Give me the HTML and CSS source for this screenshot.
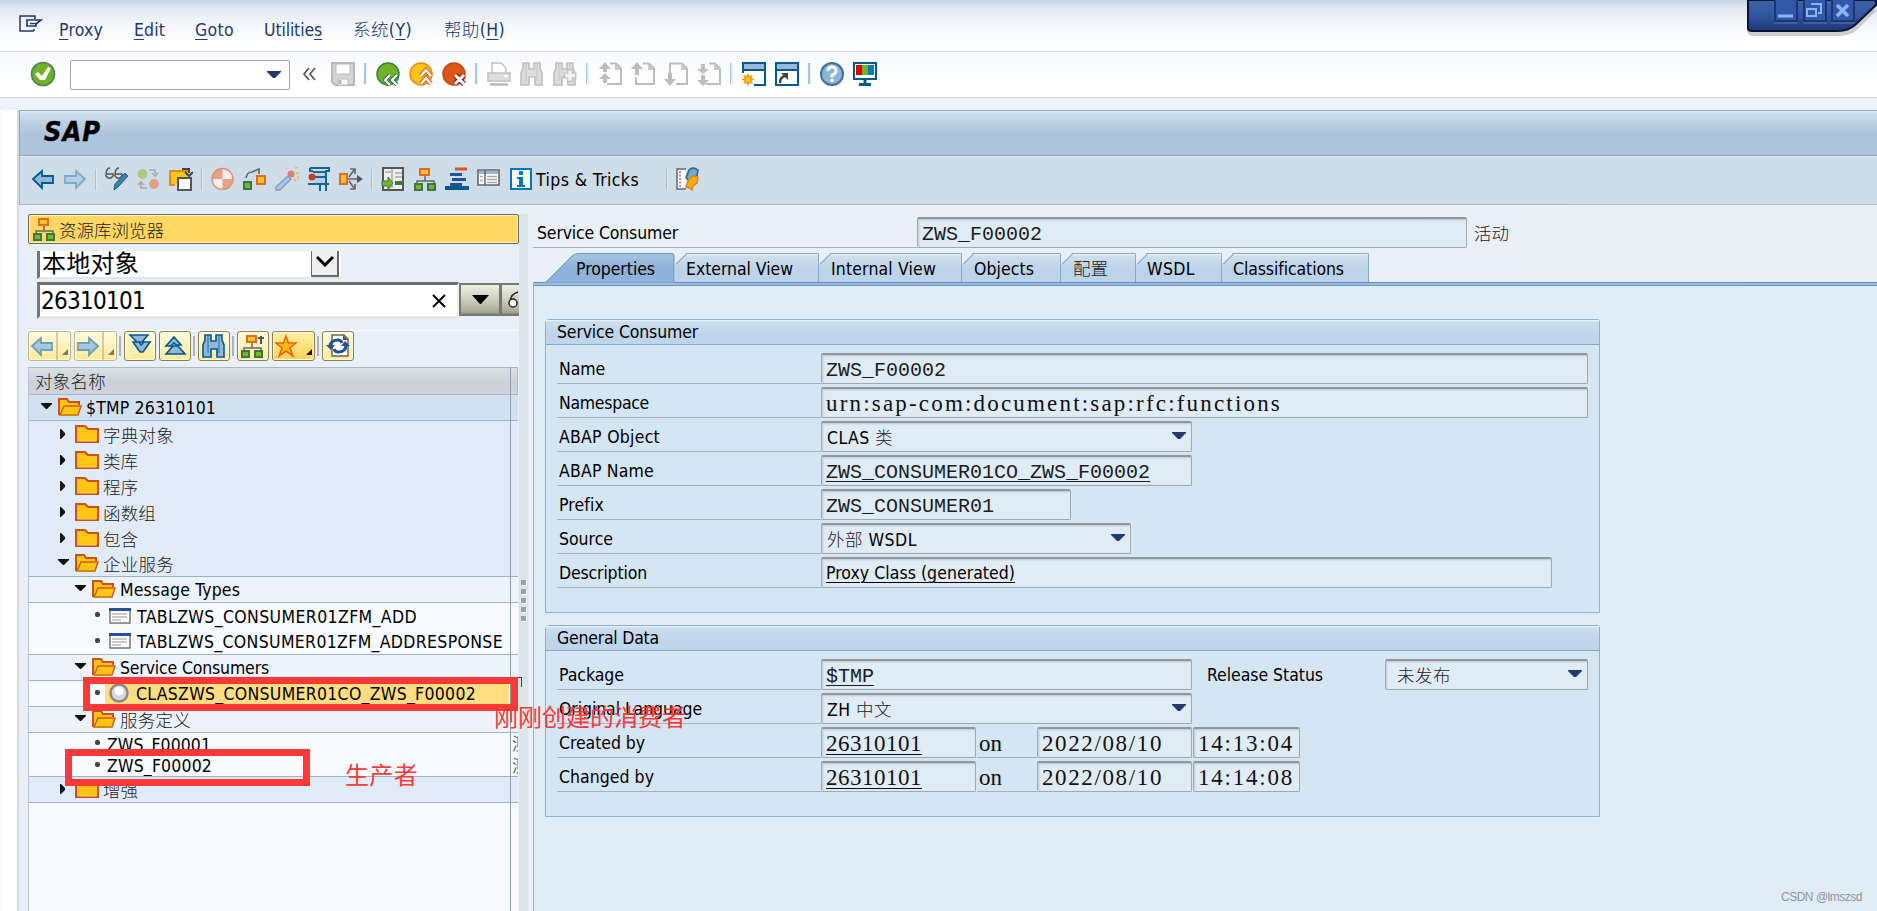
FILE: index.html
```html
<!DOCTYPE html>
<html lang="zh-CN">
<head>
<meta charset="utf-8">
<title>SAP</title>
<link rel="stylesheet" href="styles.css">
</head>
<body>
<svg class="defs" aria-hidden="true">
  <defs>
    <symbol id="folder" viewBox="0 0 24 18"><path d="M1 17V1h9l3 3h10v13z" fill="#ffc414" stroke="#cc4f1d" stroke-width="2"/><path d="M2.500 16h19" stroke="#ffd65c" stroke-width="1"/></symbol>
    <symbol id="open" viewBox="0 0 24 18"><path d="M1 17V1h8l2 3h10v3" fill="#ffc414" stroke="#cc4f1d" stroke-width="2"/><path d="M2 17 6 8h17l-3 9z" fill="#ffc414" stroke="#cf5d18" stroke-width="1.500"/><path d="M2 17h18" stroke="#cf8a12" stroke-width="1.500"/></symbol>
    <symbol id="dn" viewBox="0 0 11 8"><path d="M0 0h11v1L6 6H5L0 1z" fill="#111"/></symbol>
    <symbol id="rt" viewBox="0 0 6 12"><path d="M0 1h1l4 4v2l-4 4H0z" fill="#111"/></symbol>
    <symbol id="tree" viewBox="0 0 24 24"><path d="M12 9v5M4 18v-4h17v4" fill="none" stroke="#666" stroke-width="1.500"/><path d="M7 2h9v6H7z" fill="#ffc42d" stroke="#e26a22" stroke-width="2"/><path d="M2 17h7v6H2zM15 17h7v6h-7z" fill="#7db821" stroke="#39764a" stroke-width="2"/></symbol>
    <symbol id="bino" viewBox="0 0 24 24"><path d="M3 1h6v6h5V1h6v5l2 5v12h-7v-8H9v8H1V11l2-5z" fill="var(--f)" stroke="var(--s)" stroke-width="1.600"/><path d="M6 2v17M17 2v17" stroke="var(--s)" stroke-width=".8"/></symbol>
    <symbol id="page" viewBox="0 0 24 24"><path d="M12 1.500h6l5 5v15.500H9" fill="none" stroke="#bdbdbd" stroke-width="2"/><path d="M17 1v7h6z" fill="#c9c9c9"/></symbol>
    <symbol id="tri" viewBox="0 0 14 9"><path d="M0 1h14v1L8 8H6L0 2z" fill="#22386e"/></symbol>
  </defs>
</svg>

<header class="menubar">
  <svg class="exit" width="24" height="18" viewBox="0 0 24 18"><path d="M15 16H1V1h15v3M15 16v-2" fill="none" stroke="#22386e" stroke-width="1.500"/><path d="M8 5h14l-5 4v2H8zM11 8.500h6" fill="#fff" stroke="#22386e" stroke-width="1.700"/></svg>
  <span class="menu m1" data-w="44"><u>P</u>roxy</span>
  <span class="menu m2" data-w="31"><u>E</u>dit</span>
  <span class="menu m3" data-w="39"><u>G</u>oto</span>
  <span class="menu m4" data-w="58">Utilitie<u>s</u></span>
  <span class="menu m5" data-w="59">系统(<u>Y</u>)</span>
  <span class="menu m6" data-w="61">帮助(<u>H</u>)</span>
</header>
<svg class="winctl" width="132" height="42" viewBox="0 0 132 42">
  <defs><linearGradient id="wb" x1="0" y1="0" x2="0" y2="1"><stop offset="0" stop-color="#3c63a8"/><stop offset=".5" stop-color="#3156a0"/><stop offset="1" stop-color="#1d3674"/></linearGradient></defs>
  <path d="M2 0v30q0 6 7 6h86q12-1 18-7l19-19" fill="#999" opacity=".45"/>
  <path d="M3 0v28q0 3 4 3h86q10 0 17-6L131 5V0z" fill="url(#wb)" stroke="#0b1431" stroke-width="2"/>
  <path d="M30-2h22v23H30zM59-2h22v23H59zM87-2h22v23H87z" fill="#3158a6" stroke="#1c3674" stroke-width="2"/>
  <path d="M29 23h24M58 23h24M86 23h24" stroke="#5377ba"/>
  <path d="M33 16h15" stroke="#8cb2f7" stroke-width="3"/>
  <path d="M66 4h10v9h-3M62 9h9v7h-9zM62 9h10" fill="none" stroke="#8cb2f7" stroke-width="2"/>
  <path d="m92 5 11 11M103 5 92 16" stroke="#8cb2f7" stroke-width="3.600"/>
</svg>

<div class="stdbar">
  <svg width="26" height="26" viewBox="0 0 26 26"><circle cx="13" cy="13" r="11.500" fill="#70b128" stroke="#4d8350" stroke-width="1.600"/><path d="m5 13 3-2 4 4 6-9 3 1-6 12h-5z" fill="#fff"/></svg>
  <div class="combo"><svg width="14" height="9"><use href="#tri"/></svg></div>
  <svg class="chev" width="14" height="14" viewBox="0 0 14 14"><path d="M7 1 2 7l5 6M13 1 8 7l5 6" fill="none" stroke="#555" stroke-width="1.700"/></svg>
  <div class="icons33">
    <svg viewBox="0 0 24 24"><path d="M1 1h22v22H4l-3-3z" fill="#d5d5d5" stroke="#b9b9b9" stroke-width="2"/><path d="M5 2h14v10H5zM7 17h10v6H7z" fill="#fff" stroke="#b9b9b9"/><path d="M9 18v4" stroke="#b9b9b9" stroke-width="3"/></svg>
    <i class="sep"></i>
    <svg viewBox="0 0 24 24"><circle cx="12" cy="12" r="11" fill="#70b128" stroke="#3f8143" stroke-width="1.500"/><path d="m14 13-5 5 5 5M21 13l-5 5 5 5" fill="none" stroke="#2d6e3a" stroke-width="4"/><path d="m14 13-5 5 5 5M21 13l-5 5 5 5" fill="none" stroke="#fff" stroke-width="2.200"/></svg>
    <svg viewBox="0 0 24 24"><circle cx="12" cy="12" r="11" fill="#ffc414" stroke="#ee8a1c" stroke-width="1.500"/><path d="m12 14 5-6 5 6M12 22l5-6 5 6" fill="none" stroke="#d8601e" stroke-width="4.500"/><path d="m12 14 5-6 5 6M12 22l5-6 5 6" fill="none" stroke="#fff" stroke-width="2.400"/></svg>
    <svg viewBox="0 0 24 24"><circle cx="12" cy="12" r="11" fill="#dc5614" stroke="#c04a1d" stroke-width="1.500"/><path d="m13 13 9 9M22 13l-9 9" stroke="#a71b14" stroke-width="5.500"/><path d="m13 13 9 9M22 13l-9 9" stroke="#fff" stroke-width="3"/></svg>
    <i class="sep"></i>
    <svg viewBox="0 0 24 24"><path d="M5 11V1h9l5 5v5" fill="#fff" stroke="#c2c2c2" stroke-width="1.500"/><path d="M1 11h22v8H1z" fill="#ddd" stroke="#c2c2c2" stroke-width="1.500"/><path d="M3 22.500h18" stroke="#b8b8b8" stroke-width="2.500"/><path d="M17 14h4" stroke="#fff" stroke-width="2"/></svg>
    <svg viewBox="0 0 24 24" class="gray"><use href="#bino"/></svg>
    <svg viewBox="0 0 24 24" class="gray"><use href="#bino"/><path d="M17 7v13M10.500 13.500h13" stroke="#c4c4c4" stroke-width="6"/><path d="M17 8.500v10M12 13.500h10" stroke="#f3f3f3" stroke-width="3.400"/></svg>
    <i class="sep"></i>
    <svg viewBox="0 0 24 24"><use href="#page"/><path d="m7 0 6 7H9v3H5V7H1zM7 11l6 6H9v4H5v-4H1z" fill="#bdbdbd"/></svg>
    <svg viewBox="0 0 24 24"><use href="#page"/><path d="m6 0 6 7H8v6H4V7H0z" fill="#bdbdbd"/><path d="M5 15v7h5" fill="none" stroke="#bdbdbd" stroke-width="2"/></svg>
    <svg viewBox="0 0 24 24"><path d="M6 12V1.500h12l5 5V22H12" fill="none" stroke="#bdbdbd" stroke-width="2"/><path d="M17 1v7h6z" fill="#c9c9c9"/><path d="m6 24 6-7H8v-6H4v6H0z" fill="#bdbdbd"/></svg>
    <svg viewBox="0 0 24 24"><use href="#page"/><path d="m6 12 6-5H8V2H4v5H0zM6 24l6-6H8v-5H4v5H0z" fill="#bdbdbd"/></svg>
    <i class="sep"></i>
    <svg viewBox="0 0 24 24"><path d="M1 11V1h22v22H12" fill="#fff" stroke="#005a8c" stroke-width="2"/><path d="M2 2h20v5H2z" fill="#96b8dc"/><path d="M1 8h22" stroke="#005a8c" stroke-width="2"/><path d="m6 11 1.500 3 3-1-1 3 3 1.500-3 1.500 1 3-3-1L6 24l-1.500-3-3 1 1-3-3-1.500 3-1.500-1-3 3 1z" fill="#f39c12"/><circle cx="6" cy="17.500" r="2.500" fill="#ffc414"/></svg>
    <svg viewBox="0 0 24 24"><path d="M1 1h22v22H1z" fill="#fff" stroke="#005a8c" stroke-width="2"/><path d="M2 2h20v5H2z" fill="#96b8dc"/><path d="M1 8h22" stroke="#005a8c" stroke-width="2"/><path d="M5 21q0-6 5-7" fill="none" stroke="#444" stroke-width="2.500"/><path d="M6 11h7v7z" fill="#444"/></svg>
    <i class="sep"></i>
    <svg viewBox="0 0 24 24"><circle cx="12" cy="12" r="11" fill="#8fb4da" stroke="#3b7096" stroke-width="2"/><path d="M8 9q0-4 4-4t4 4q0 2.500-4 4.500v2M12 17v3" fill="none" stroke="#fff" stroke-width="3"/></svg>
    <svg viewBox="0 0 24 24"><path d="M1 1h22v16H1z" fill="#fff" stroke="#005a8c" stroke-width="2"/><path d="M3 3h6v10H3z" fill="#d00"/><path d="M9 3h6v10H9z" fill="#75b51c"/><path d="M15 3h6v10h-6z" fill="#0a78c4"/><path d="M12 17v5M6 22.500h12" stroke="#005a8c" stroke-width="3"/></svg>
  </div>
</div>

<main class="window">
  <div class="titlebar"><b data-w="57">SAP</b></div>
  <div class="appbar">
    <svg viewBox="0 0 24 24"><path d="M2 12 11 4v5h11v7H11v5z" fill="#92b6dc" stroke="#005a8c" stroke-width="1.800"/></svg>
    <svg viewBox="0 0 24 24"><path d="M22 12 13 4v5H2v7h11v5z" fill="#b4cfe4" stroke="#7fabc8" stroke-width="1.800"/></svg>
    <i class="sep"></i>
    <svg viewBox="0 0 24 24"><path d="M1 6q1-5 4-5M10 6q1-5 4-5M1 7h7v2L6 11H3L1 9zM10 7h7v2l-2 2h-3l-2-2z" fill="none" stroke="#555" stroke-width="1.500"/><path d="m20 6 3 3-10 11-4 3 1-6z" fill="#3a82ae" stroke="#1d5d85"/></svg>
    <svg viewBox="0 0 24 24"><circle cx="5.500" cy="7" r="5" fill="#a9ca89"/><circle cx="17" cy="17" r="5" fill="#e2a085"/><path d="M12 3h6v4M15 6l3 3 3-3M4 15v6h6M1 18l3-3 3 3" fill="none" stroke="#aaa" stroke-width="1.600"/></svg>
    <svg viewBox="0 0 24 24"><path d="M6 18H1V4h19" fill="#ffc414" stroke="#e58816" stroke-width="2"/><path d="M2 5h16v5H9v7H2z" fill="#ffc414"/><path d="M9 11h13v12H9z" fill="#fff" stroke="#555" stroke-width="2"/><path d="M13 2h7v4M16 5l4 4 4-4" fill="none" stroke="#444" stroke-width="2"/></svg>
    <i class="sep"></i>
    <svg viewBox="0 0 24 24"><circle cx="11.500" cy="12" r="10.500" fill="#f3eeeb"/><path d="M11.500 12V1.500A10.500 10.500 0 0 0 1 12zM11.500 12H22a10.500 10.500 0 0 1-10.500 10.500z" fill="#e5a287"/><circle cx="11.500" cy="12" r="10.500" fill="none" stroke="#dd9379" stroke-width="1.500"/></svg>
    <svg viewBox="0 0 24 24"><path d="M3 11q1-6 6-6l7-3v5" fill="none" stroke="#666" stroke-width="1.600"/><path d="M14 9h8v8h-8z" fill="#ffc42d" stroke="#e26a22" stroke-width="2"/><path d="M1 15h7v7H1z" fill="#7db821" stroke="#39764a" stroke-width="2"/></svg>
    <svg viewBox="0 0 24 24"><path d="M13 9 1 20v3h4L16 12z" fill="#a9c5e1" stroke="#7da4bd" stroke-width="1.500"/><circle cx="16" cy="7" r="3.500" fill="#d98573"/><path d="m11 1 1 1M20 1l3-1M21 6h3M19 12l2 2M22 10l2 1" stroke="#eabb62" stroke-width="2"/></svg>
    <svg viewBox="0 0 24 24"><path d="M3 1h19v3h-3v13h3M3 1v3h3M1 17h18M13 18v6M19 17v7" fill="none" stroke="#12669a" stroke-width="2"/><path d="M7 4h11v12H7z" fill="#b8cfe6"/><path d="M6 5h12M6 10h12M2 17h18" stroke="#12669a" stroke-width="2"/><circle cx="5" cy="10" r="3.500" fill="#cb3b23"/></svg>
    <svg viewBox="0 0 24 24"><path d="M1 7h7v10H1z" fill="#ffc42d" stroke="#e26a22" stroke-width="2"/><path d="M9 12h10M10 10l5-7M10 14l5 7M11 2h5v5M11 22h5v-5" fill="none" stroke="#666" stroke-width="1.600"/><path d="m18 8 6 4-6 4z" fill="#555"/></svg>
    <i class="sep"></i>
    <svg viewBox="0 0 24 24"><path d="M2 1h20v22H2z" fill="#eee" stroke="#555" stroke-width="2"/><path d="M11 2v19M4 5h6M14 6h7M14 10h7" stroke="#bbb" stroke-width="2"/><path d="m12 16-5-6v4H1v5h6v4z" fill="#76b51e" stroke="#39764a"/><path d="M14 16h8" stroke="#39764a" stroke-width="4"/></svg>
    <svg viewBox="0 0 24 24"><use href="#tree"/></svg>
    <svg viewBox="0 0 24 24"><path d="M10 2h12" stroke="#d9572a" stroke-width="3"/><path d="M5 7.500h12M7 12.500h14" stroke="#24509c" stroke-width="3"/><path d="M5 17.500h12" stroke="#24509c" stroke-width="3"/><path d="M1 22v-2h22v2z" fill="none" stroke="#005a8c" stroke-width="2"/></svg>
    <svg viewBox="0 0 24 24"><path d="M1 3h21v15H1z" fill="#fff" stroke="#666" stroke-width="1.600"/><path d="M2 4h19v3H2z" fill="#92b6dc"/><path d="M8 3v15" stroke="#666" stroke-width="1.500"/><path d="M3 9.500h3M3 13.500h3M10 9.500h10M10 12.500h10M10 15.500h10" stroke="#aaa" stroke-width="1.500"/></svg>
    <svg viewBox="0 0 24 24"><path d="M2 2h20v20H2z" fill="#fff" stroke="#0078be" stroke-width="2"/><path d="M10 4h4v4h-4zM8 10h6v8h2v2H8v-2h2v-6H8z" fill="#0078be"/></svg>
    <span class="tips" data-w="103">Tips &amp; Tricks</span>
    <i class="sep seplast"></i>
    <svg viewBox="0 0 24 24"><path d="M10 2H1v20h9" fill="#fff" stroke="#666" stroke-width="1.500"/><path d="M4 4v16" stroke="#777" stroke-width="1.500" stroke-dasharray="2 1.500"/><path d="M13 3q4-4 9 0l-1 6-4 1-3 4-4-3z" fill="#78a5cc" stroke="#23648f" stroke-width="1.500"/><path d="m13 12 4-3 5 1-1 6-4 3-1 4-2-2-4-1z" fill="#f7ac16" stroke="#e6821a" stroke-width="1.500"/></svg>
  </div>

  <div class="work">
    <section class="nav">
      <div class="navtitle"><svg width="24" height="24"><use href="#tree"/></svg><span class="cjk" data-w="105">资源库浏览器</span></div>
      <div class="picker"><span data-w="97">本地对象</span><div class="pickbtn"><svg width="18" height="12" viewBox="0 0 18 12"><path d="m1 2 8 8 8-8" fill="none" stroke="#000" stroke-width="3"/></svg></div></div>
      <div class="search">
        <div class="query"><span data-w="104">26310101</span><svg width="14" height="14" viewBox="0 0 14 14"><path d="m1 1 12 12M13 1 1 13" stroke="#000" stroke-width="2"/></svg></div>
        <div class="sbtn"><svg width="17" height="10" viewBox="0 0 17 10"><path d="M0 0h17L9 9H8z"/></svg></div>
        <div class="sbtn cut"><svg width="20" height="18" viewBox="0 0 20 18"><path d="M10 1Q3 3 2 10" fill="none" stroke="#222" stroke-width="1.500"/><circle cx="5" cy="12" r="4" fill="#fff" stroke="#222" stroke-width="1.500"/></svg></div>
      </div>
      <div class="navtools">
        <div class="yb wide off"><svg viewBox="0 0 24 24"><path d="M2 12 11 4v5h11v7H11v5z" fill="#a5c8dc" stroke="#6ea1b9" stroke-width="1.800"/></svg><svg class="more" viewBox="0 0 14 24"><path d="M0-2v28" stroke="#aaa28a"/><path d="M11 15v6H5z" fill="#777"/></svg></div>
        <div class="yb wide off g3"><svg viewBox="0 0 24 24"><path d="M22 12 13 4v5H2v7h11v5z" fill="#a5c8dc" stroke="#6ea1b9" stroke-width="1.800"/></svg><svg class="more" viewBox="0 0 14 24"><path d="M0-2v28" stroke="#aaa28a"/><path d="M11 15v6H5z" fill="#777"/></svg></div>
        <i class="s2"></i>
        <div class="yb"><svg viewBox="0 0 24 24"><path d="M2 1h18l-6 7H9zM5 8h6l2 3 3-3h6l-7 10h-3z" fill="#92b6dc" stroke="#005a8c" stroke-width="1.600"/></svg></div>
        <div class="yb g3"><svg viewBox="0 0 24 24"><path d="m11 3 7 8h-5l-2-2-3 3H3zM3 20l7-8h5l7 8z" fill="#92b6dc" stroke="#005a8c" stroke-width="1.600"/></svg></div>
        <i class="s2"></i>
        <div class="yb"><svg viewBox="0 0 24 24" class="blue"><use href="#bino"/></svg></div>
        <i class="s2"></i>
        <div class="yb"><svg viewBox="0 0 24 24"><use href="#tree" x="-1"/><path d="M20 10V2M17 4h6" stroke="#555" stroke-width="2"/></svg></div>
        <div class="yb wide star g3"><svg viewBox="0 0 24 24"><path d="m12 2 2.500 7H22l-6 5 3 8-7-5-7 5 3-8-6-5h7.500z" fill="#ffb914" stroke="#df671b" stroke-width="1.600"/></svg><svg class="more" viewBox="0 0 14 24"><path d="M11 15v6H5z" fill="#111"/></svg></div>
        <i class="s2"></i>
        <div class="yb"><svg viewBox="0 0 24 24"><path d="M6 1h12l4 4v17H6z" fill="#fff" stroke="#666" stroke-width="1.500"/><path d="M17 1v5h5" fill="#555"/><path d="M4 12q1-6 8-6 3 0 4 3M20 11q0 7-8 7-3 0-4-3" fill="none" stroke="#24509c" stroke-width="3"/><path d="M0 11h9l-4 5zM24 12h-9l4-5z" fill="#24509c"/></svg></div>
      </div>
      <div class="tree">
        <div class="thead cjk"><span data-w="71">对象名称</span></div>
        <div class="row root line l0"><svg class="dn"><use href="#dn"/></svg><svg class="fo"><use href="#open"/></svg><span data-w="130">$TMP 26310101</span></div>
        <div class="row a l1"><svg class="rt"><use href="#rt"/></svg><svg class="fo"><use href="#folder"/></svg><span class="cjk" data-w="71">字典对象</span></div>
        <div class="row a l1"><svg class="rt"><use href="#rt"/></svg><svg class="fo"><use href="#folder"/></svg><span class="cjk" data-w="35">类库</span></div>
        <div class="row a l1"><svg class="rt"><use href="#rt"/></svg><svg class="fo"><use href="#folder"/></svg><span class="cjk" data-w="35">程序</span></div>
        <div class="row a l1"><svg class="rt"><use href="#rt"/></svg><svg class="fo"><use href="#folder"/></svg><span class="cjk" data-w="53">函数组</span></div>
        <div class="row a l1"><svg class="rt"><use href="#rt"/></svg><svg class="fo"><use href="#folder"/></svg><span class="cjk" data-w="35">包含</span></div>
        <div class="row a line l1"><svg class="dn"><use href="#dn"/></svg><svg class="fo"><use href="#open"/></svg><span class="cjk" data-w="71">企业服务</span></div>
        <div class="row b line l2"><svg class="dn"><use href="#dn"/></svg><svg class="fo"><use href="#open"/></svg><span data-w="120">Message Types</span></div>
        <div class="row c l3"><i class="dot"></i><svg class="doc" viewBox="0 0 22 16"><path d="M1 1h20v14H1z" fill="#fff" stroke="#777" stroke-width="1.500"/><path d="M0 1.500h22" stroke="#24509c" stroke-width="3"/><path d="M3 6h15M3 9h15M3 12h9" stroke="#bbb" stroke-width="1.600"/></svg><span data-w="280">TABLZWS_CONSUMER01ZFM_ADD</span></div>
        <div class="row c line l3"><i class="dot"></i><svg class="doc" viewBox="0 0 22 16"><path d="M1 1h20v14H1z" fill="#fff" stroke="#777" stroke-width="1.500"/><path d="M0 1.500h22" stroke="#24509c" stroke-width="3"/><path d="M3 6h15M3 9h15M3 12h9" stroke="#bbb" stroke-width="1.600"/></svg><span data-w="366">TABLZWS_CONSUMER01ZFM_ADDRESPONSE</span></div>
        <div class="row b line l2"><svg class="dn"><use href="#dn"/></svg><svg class="fo"><use href="#open"/></svg><span data-w="149">Service Consumers</span></div>
        <div class="row c line l3"><i class="dot"></i><div class="hit"><svg width="22" height="22" viewBox="0 0 22 22"><circle cx="10" cy="10" r="8.500" fill="#d7d5dd" stroke="#8b8986" stroke-width="2.500"/><circle cx="10" cy="8" r="4.500" fill="#fff"/></svg><span data-w="340">CLASZWS_CONSUMER01CO_ZWS_F00002</span></div></div>
        <div class="row b line l2"><svg class="dn"><use href="#dn"/></svg><svg class="fo"><use href="#open"/></svg><span class="cjk" data-w="71">服务定义</span></div>
        <div class="row c short l3"><i class="dot"></i><span data-w="104">ZWS_F00001</span><em class="cjk">测</em></div>
        <div class="row c short line l3"><i class="dot"></i><span data-w="105">ZWS_F00002</span><em class="cjk">测</em></div>
        <div class="row a line l1"><svg class="rt"><use href="#rt"/></svg><svg class="fo"><use href="#folder"/></svg><span class="cjk" data-w="35">增强</span></div>
        <div class="colline"></div>
      </div>
    </section>

    <div class="splitter"><i></i><i></i><i></i><i></i><i></i></div>

    <section class="detail">
      <div class="head"><div class="lab"><span data-w="141">Service Consumer</span></div><div class="field mono w550">ZWS_F00002</div><span class="cjk active" data-w="35">活动</span></div>
      <div class="tabs">
        <div class="tab t1"><svg viewBox="0 0 130 30" preserveAspectRatio="none"><defs><linearGradient id="tg" x1="0" y1="0" x2="0" y2="1"><stop offset="0" stop-color="#a5c4e3"/><stop offset=".5" stop-color="#8fb2da"/><stop offset="1" stop-color="#8fb2dc"/></linearGradient></defs><path d="M0 30 26 4Q29 .500 33 .500h94q2 0 2 2V30z" fill="url(#tg)" stroke="#6d94bd"/></svg><span data-w="79">Properties</span></div>
        <div class="tab t2"><span data-w="107">External View</span></div>
        <div class="tab t3"><span data-w="105">Internal View</span></div>
        <div class="tab t4"><span data-w="60">Objects</span></div>
        <div class="tab t5"><span class="cjk" data-w="35">配置</span></div>
        <div class="tab t6"><span data-w="48">WSDL</span></div>
        <div class="tab t7"><span data-w="111">Classifications</span></div>
      </div>
      <div class="panel">
        <div class="group g1">
          <h2><span data-w="141">Service Consumer</span></h2>
          <div class="r"><div class="lab"><span data-w="46">Name</span></div><div class="field mono w767">ZWS_F00002</div></div>
          <div class="r"><div class="lab"><span data-w="90">Namespace</span></div><div class="field serif w767"><span data-w="456">urn:sap-com:document:sap:rfc:functions</span></div></div>
          <div class="r"><div class="lab"><span data-w="101">ABAP Object</span></div><div class="field sel w371"><span data-w="66">CLAS <span class="cjk">类</span></span><svg width="14" height="9"><use href="#tri"/></svg></div></div>
          <div class="r"><div class="lab"><span data-w="95">ABAP Name</span></div><div class="field mono w371"><u>ZWS_CONSUMER01CO_ZWS_F00002</u></div></div>
          <div class="r"><div class="lab"><span data-w="45">Prefix</span></div><div class="field mono w250">ZWS_CONSUMER01</div></div>
          <div class="r"><div class="lab"><span data-w="54">Source</span></div><div class="field sel w310"><span data-w="90"><span class="cjk">外部</span> WSDL</span><svg width="14" height="9"><use href="#tri"/></svg></div></div>
          <div class="r"><div class="lab"><span data-w="88">Description</span></div><div class="field w731"><u data-w="189">Proxy Class (generated)</u></div></div>
        </div>
        <div class="group g2">
          <h2><span data-w="102">General Data</span></h2>
          <div class="r"><div class="lab"><span data-w="65">Package</span></div><div class="field mono w371"><u>$TMP</u></div><div class="rel"><span data-w="116">Release Status</span></div><div class="field sel status w203"><span class="cjk" data-w="54">未发布</span><svg width="14" height="9"><use href="#tri"/></svg></div></div>
          <div class="r"><div class="lab"><span data-w="143">Original Language</span></div><div class="field sel w371"><span data-w="65">ZH <span class="cjk">中文</span></span><svg width="14" height="9"><use href="#tri"/></svg></div></div>
          <div class="r"><div class="lab"><span data-w="86">Created by</span></div><div class="field serif w155"><u data-w="96">26310101</u></div><div class="link serif">on</div><div class="field serif w155"><span data-w="121">2022/08/10</span></div><div class="field serif w107"><span data-w="96">14:13:04</span></div></div>
          <div class="r"><div class="lab"><span data-w="95">Changed by</span></div><div class="field serif w155"><u data-w="96">26310101</u></div><div class="link serif">on</div><div class="field serif w155"><span data-w="121">2022/08/10</span></div><div class="field serif w107"><span data-w="96">14:14:08</span></div></div>
        </div>
      </div>
    </section>
  </div>
</main>

<div class="mark box1"></div>
<div class="mark box2"></div>
<div class="note n1" data-w="192">刚刚创建的消费者</div>
<div class="note n2" data-w="73">生产者</div>
<div class="credit" data-w="81">CSDN @lmszsd</div>
<script src="fit.js"></script>
</body>
</html>
```
FILE: fit.js
```js
// Spreads each label over its nominal width by adjusting the tracking.
document.querySelectorAll('[data-w]').forEach(function (el) {
  var natural = el.getBoundingClientRect().width;
  var n = Array.from(el.textContent).length;
  el.style.letterSpacing = ((Number(el.dataset.w) - natural) / n) + 'px';
});
```
FILE: styles.css
```css
* { box-sizing: border-box; }
body { margin: 0; width: 1877px; height: 911px; overflow: hidden; position: relative; background: #fff; color: #000;
  font: 17.500px "DejaVu Sans Condensed", "DejaVu Sans", "Noto Sans CJK SC", sans-serif; white-space: nowrap; }
[data-w] { display: inline-block; flex: none; }
.defs { position: absolute; width: 0; height: 0; }
svg { display: block; flex: none; }
.cjk { font-family: "Noto Sans CJK SC", sans-serif; font-weight: 300; color: #222; }
.mono { font-family: "Liberation Mono", monospace; font-size: 20px; color: #1c1c1c; }
.serif { font-family: "Liberation Serif", serif; font-size: 23px; color: #111; }
u { text-underline-offset: 3px; text-decoration-thickness: 1px; }

.menubar { height: 52px; display: flex; align-items: flex-start; padding-left: 19px; color: #22386e;
  background: linear-gradient(#c8d5e6, #e4eaf3 10px, #f5f7fb 26px, #fff 42px); border-bottom: 1px solid #d5d7dc; }
.exit { margin-top: 15px; }
.menu { margin-top: 17px; line-height: 27px; font-weight: 300; }
.m1 { margin-left: 16px; }
.m2 { margin-left: 31px; }
.m3 { margin-left: 30px; }
.m4 { margin-left: 30px; }
.m5 { margin-left: 31px; }
.m6 { margin-left: 32px; }
.winctl { position: absolute; right: 0; top: 0; }

.stdbar { height: 46px; display: flex; align-items: center; padding: 0 0 2px 30px; border-bottom: 1px solid #d0d3d9;
  background: linear-gradient(#f7f9fc, #fff 30px); }
.combo { width: 220px; height: 30px; margin: 2px 0 0 14px; border: 1.500px solid #a2a2a8; border-radius: 2px; background: #fff;
  display: flex; align-items: center; justify-content: flex-end; padding-right: 8px; }
.chev { margin-left: 12px; }
.icons33 { display: flex; gap: 9px; align-items: center; margin-left: 15px; }
.icons33 svg, .appbar svg { width: 24px; height: 24px; }
.icons33 .sep { width: 3px; height: 21px; background: linear-gradient(90deg, #a9c5e0 50%, #e6eef6 50%); }
.gray { --f: #dcdcdc; --s: #bebebe; }
.blue { --f: #92b6dc; --s: #005a8c; }

.window { height: 813px; padding: 12px 0 0 19px; display: flex; flex-direction: column;
  background: linear-gradient(90deg, #f6f6f7 0, #fff 4px, #fff 17px, #d4dbe8 17px, #d4dbe8 19px, #e8eff7 19px); box-shadow: inset 0 12px 0 #eef3fa; }
.titlebar { height: 46px; flex: none; border: 1px solid #8ea6bd; border-width: 1px 0 1px 1px; padding-left: 24px; display: flex; align-items: center;
  background: linear-gradient(#e8f2fa 0, #cfe0ec 2px, #b9cedf 14px, #adc4dc 24px, #adc4dd 100%); }
.titlebar b { font: italic bold 27px/36px "DejaVu Sans Condensed", "DejaVu Sans", sans-serif; margin-top: -3px; -webkit-text-stroke: .4px #000; }
.appbar { height: 49px; flex: none; display: flex; align-items: center; gap: 8px; padding: 0 0 2px 11px; background: #cfdde8;
  border-left: 1px solid #a8b8cc; border-bottom: 1px solid #a9b9cf; box-shadow: inset 0 1px #e5edf4; }
.appbar .sep { width: 2px; height: 21px; background: linear-gradient(90deg, #a4c0dc 50%, #dfe9f2 50%); }
.tips { margin: 2px 0 0 -5px; }
.appbar .seplast { margin-left: 19px; }

.work { flex: 1; display: flex; min-height: 0; background: linear-gradient(90deg, #e8eff7 0, #e9f0f6 100%); }
.nav { width: 500px; padding: 9px 0 0 9px; display: flex; flex-direction: column; overflow: hidden; flex: none; }
.navtitle { height: 30px; flex: none; display: flex; align-items: center; gap: 3px; padding: 0 3px; background: #ffd863; border: 1px solid #6d6b60; border-radius: 2px; box-shadow: inset 0 0 0 1px #fff1bd; }
.navtitle .cjk { line-height: 28px; padding-top: 2px; }
.picker { flex: none; width: 304px; height: 28px; margin: 7px 0 0 9px; background: #fff; border-left: 3px solid #747474; border-bottom: 2px solid #e5e5e5; display: flex; justify-content: space-between; padding-left: 2px; }
.picker > span { font: 24px/25px "Noto Sans CJK SC", sans-serif; margin-top: -2px; }
.pickbtn { width: 28px; height: 26px; background: #eee; border: solid #6a6a6a; border-width: 0 2px 2px 1px; display: flex; align-items: center; justify-content: center; margin-right: 2px; padding-bottom: 5px; }
.search { flex: none; display: flex; height: 37px; margin: 3px 0 0 9px; }
.query { flex: none; width: 422px; height: 37px; border: solid; border-width: 3px 2px 3px 3px; border-color: #6e6e6e #eee #e6e6e6 #777; background: #fff; display: flex; align-items: center; justify-content: space-between; padding: 0 11px 0 1px; font-size: 24px; }
.sbtn { flex: none; width: 42px; height: 33px; margin-top: 1px; border: 2px solid #777; background: linear-gradient(#eef0e2, #d3d6c6 12px, #abac9a 26px, #8d8e7e); display: flex; align-items: center; justify-content: center; }
.cut { justify-content: flex-start; padding-left: 6px; margin-left: -1px; }
.navtools { flex: none; display: flex; align-items: flex-start; height: 37px; margin-top: 11px; box-shadow: inset 0 1px #f8fbfe; padding-top: 1px; }
.yb { width: 32px; height: 30px; flex: none; border: 1px solid #8a7e52; border-radius: 3px; box-shadow: inset 0 0 0 1px #fffbe0; background: linear-gradient(#fffbe0, #ffe995); display: flex; align-items: center; padding-left: 3px; }
.yb svg { width: 24px; height: 24px; }
.wide { width: 43px; padding-left: 1px; }
.yb .more { width: 14px; overflow: visible; margin-left: 3px; }
.off { border-color: #c1b68c; }
.star { background: linear-gradient(#fff0a3, #ffd257); }
.g3 { margin-left: 3px; }
.s2 { width: 2px; height: 20px; background: #b0b2b4; margin: 5px 3px 0 2px; flex: none; }
.tree { flex: 1; width: 490px; position: relative; border-left: 1px solid #bac6d6; background: #f7faff; min-height: 0; }
.thead { height: 28px; border: solid #a9b7c7; border-width: 1px 1px 1px 0; background: linear-gradient(#dbe0e4, #ccd2d8 14px, #d1d4da); line-height: 25px; padding-left: 6px; }
.row { height: 26px; display: flex; align-items: center; overflow: hidden; position: relative; }
.row > span, .hit > span { padding-top: 1px; }
.short { height: 22px; }
.line { border-bottom: 1px solid #9db1cb; }
.root { background: #d2e1f0; }
.a { background: #e1eaf7; }
.b { background: #ecf3fb; }
.l0 { padding-left: 12px; }
.l1 { padding-left: 29px; }
.l2 { padding-left: 46px; }
.l3 { padding-left: 66px; }
.dn { width: 11px; height: 8px; margin-right: 6px; margin-top: -2px; }
.rt { width: 6px; height: 12px; margin: -1px 9px 0 2px; }
.fo { width: 24px; height: 18px; margin-right: 4px; margin-top: -1px; }
.row > .cjk { padding-top: 0; }
.dot { width: 5px; height: 5px; background: #444; border-radius: 2px; margin: -3px 9px 0 0; flex: none; }
.short .dot { margin-right: 7px; }
.doc { width: 22px; height: 16px; margin-right: 6px; margin-top: -1px; }
.hit { display: flex; align-items: center; gap: 5px; width: 404px; height: 25px; margin-left: -4px; padding-left: 4px; background: #fddd80; }
.row em { position: absolute; left: 483px; top: -3px; font-style: normal; }
.colline { position: absolute; left: 481px; top: 0; bottom: 0; width: 1px; background: #8e9bab; }
.splitter { width: 9px; flex: none; margin-top: 9px; background: #dbe6ea; display: flex; flex-direction: column; align-items: center; gap: 4px; padding-top: 366px; }
.splitter i { width: 5px; height: 5px; background: #94a3b6; box-shadow: 1px 1px #fff; }

.detail { flex: 1; padding: 12px 0 0 5px; display: flex; flex-direction: column; min-width: 0; }
.head { display: flex; height: 31px; flex: none; }
.lab { height: 31px; line-height: 33px; border-bottom: 1px solid #a9b1b9; flex: none; }
.head .lab { width: 384px; padding-left: 4px; }
.active { margin-left: 7px; line-height: 31px; }
.field { height: 31px; flex: none; border: 1px solid #a3a8ad; border-top: 2px solid #92979d; border-radius: 2px; background: #dfebf5; box-shadow: inset 1px 1px 2px #b9c8d6; padding: 0 4px; line-height: 28px; }
.mono.field { line-height: 31px; padding-left: 4px; }
.serif.field { line-height: 30px; padding-left: 4px; }
.sel { display: flex; justify-content: space-between; align-items: center; padding: 0 5px; }
.sel svg { margin-top: -4px; }
.status { padding-left: 11px; }
.w550 { width: 550px; } .w767 { width: 767px; } .w731 { width: 731px; } .w371 { width: 371px; } .w310 { width: 310px; }
.w250 { width: 250px; } .w203 { width: 203px; } .w155 { width: 155px; } .w107 { width: 107px; }
.tabs { display: flex; height: 29px; margin: 5px 0 0 12px; flex: none; }
.tab { position: relative; height: 29px; line-height: 31px; flex: none; border: solid #8aa8c8; border-width: 1px 1px 0 0; border-radius: 0 2px 0 0; background: linear-gradient(#f2f7fb 0, #cfdfec 2px, #bcd3ea 16px, #bdd3e9); padding-left: 11px; clip-path: polygon(0 11px, 11px 0, 100% 0, 100% 100%, 0 100%); }
.tab::before { content: ""; position: absolute; left: -1px; top: 4px; width: 16px; height: 1px; background: #8aa8c8; transform: rotate(-45deg); }
.tab .cjk { line-height: 28px; }
.t1 { width: 130px; background: none; border: 0; clip-path: none; padding: 1px 0 0 31px; }
.t1::before { display: none; }
.t1 svg { position: absolute; left: 0; top: 0; width: 130px; height: 30px; }
.t1 span { position: relative; }
.t2 { width: 144px; } .t3 { width: 143px; padding-left: 12px; } .t4 { width: 99px; padding-left: 12px; } .t5 { width: 75px; padding-left: 12px; } .t6 { width: 86px; } .t7 { width: 147px; }
.panel { flex: 1; border-left: 1px solid #8eafd0; padding: 37px 0 0 11px; background: #dfebf5; box-shadow: inset 0 1px #638cb9, inset 0 3px #9dbce1, inset 0 4px #6b93bf; }
.group { width: 1055px; border: 1px solid #8fb0d1; border-radius: 4px 3px 0 0; background: #d4e5f3; padding-left: 11px; }
.g1 { height: 294px; }
.g2 { height: 192px; margin-top: 12px; }
.group h2 { margin: 0 0 8px -11px; padding-left: 11px; height: 25px; font: inherit; line-height: 25px; border-bottom: 1px solid #87a5cb; background: linear-gradient(#eff5fa 0, #cbdeed 2px, #bfd5ea 14px); }
.r { display: flex; height: 31px; margin-bottom: 3px; }
.r .lab { width: 264px; padding-left: 2px; }
.link { width: 60px; margin: 0 0 0 1px; padding-left: 2px; line-height: 34px; border-bottom: 1px solid #a9b1b9; height: 31px; }
.w155 + .w107 { margin-left: 1px; }
.rel { padding-left: 15px; line-height: 32px; width: 193px; }

.mark { position: absolute; border: 7px solid #fc3838; }
.box1 { left: 83px; top: 677px; width: 435px; height: 34px; }
.box1::after { content: ""; position: absolute; right: -11px; top: -7px; width: 3px; height: 9px; border: solid #a01018; border-width: 1px 1px 0 0; }
.box2 { left: 65px; top: 749px; width: 245px; height: 37px; }
.note { position: absolute; color: #fc3838; font: 24px/30px "Noto Sans CJK SC", sans-serif; }
.n1 { left: 494px; top: 701px; }
.n2 { left: 345px; top: 759px; }
.credit { position: absolute; left: 1781px; top: 890px; font: 12px "Liberation Sans", sans-serif; color: #8d969d; }
```
